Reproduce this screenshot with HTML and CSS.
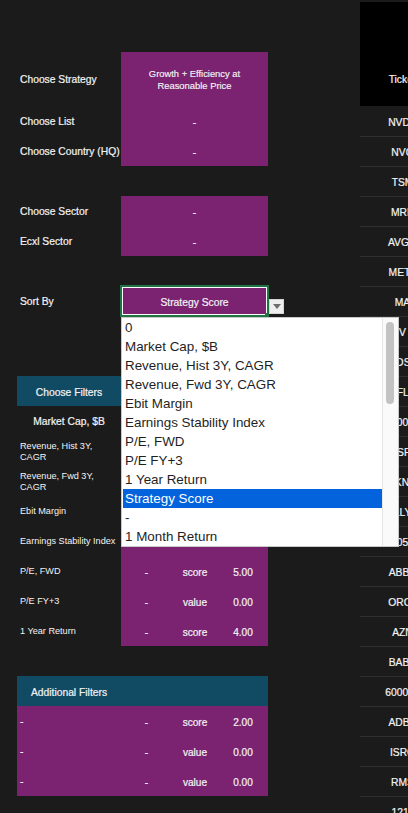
FILE: index.html
```html
<!DOCTYPE html>
<html lang="en">
<head>
<meta charset="utf-8">
<title>Strategy Screener</title>
<link rel="stylesheet" href="styles.css">
</head>
<body>
<div class="page">
  <div class="sheet">
    <div class="row tall">
      <div class="cell lbl b">Choose Strategy</div>
      <div class="cell span p small">Growth + Efficiency at<br>Reasonable Price</div>
    </div>
    <div class="row">
      <div class="cell lbl b">Choose List</div>
      <div class="cell span p b">-</div>
    </div>
    <div class="row">
      <div class="cell lbl b">Choose Country (HQ)</div>
      <div class="cell span p b">-</div>
    </div>
    <div class="row"></div>
    <div class="row">
      <div class="cell lbl b">Choose Sector</div>
      <div class="cell span p b">-</div>
    </div>
    <div class="row">
      <div class="cell lbl b">Ecxl Sector</div>
      <div class="cell span p b">-</div>
    </div>
    <div class="row"></div>
    <div class="row">
      <div class="cell lbl b">Sort By</div>
      <div class="cell span p sel">Strategy Score
        <span class="arrow"><span class="tri"></span></span>
        <div class="dropdown">
          <div class="options">
            <div class="opt">0</div>
            <div class="opt">Market Cap, $B</div>
            <div class="opt">Revenue, Hist 3Y, CAGR</div>
            <div class="opt">Revenue, Fwd 3Y, CAGR</div>
            <div class="opt">Ebit Margin</div>
            <div class="opt">Earnings Stability Index</div>
            <div class="opt">P/E, FWD</div>
            <div class="opt">P/E FY+3</div>
            <div class="opt">1 Year Return</div>
            <div class="opt on">Strategy Score</div>
            <div class="opt">-</div>
            <div class="opt">1 Month Return</div>
            <div class="opt">3 Month Return</div>
            <div class="opt">6 Month Return</div>
          </div>
          <div class="track"><div class="thumb"></div></div>
        </div>
      </div>
    </div>
    <div class="row"></div>
    <div class="row"></div>
    <div class="row head">
      <div class="cell hlbl">Choose Filters</div>
    </div>
    <div class="row">
      <div class="cell lbl b mid">Market Cap, $B</div>
      <div class="cell p v">-</div><div class="cell p v">value</div><div class="cell p v">0.00</div>
    </div>
    <div class="row">
      <div class="cell lbl">Revenue, Hist 3Y,<br>CAGR</div>
      <div class="cell p v">-</div><div class="cell p v">score</div><div class="cell p v">3.00</div>
    </div>
    <div class="row">
      <div class="cell lbl">Revenue, Fwd 3Y,<br>CAGR</div>
      <div class="cell p v">-</div><div class="cell p v">score</div><div class="cell p v">3.00</div>
    </div>
    <div class="row">
      <div class="cell lbl">Ebit Margin</div>
      <div class="cell p v">-</div><div class="cell p v">score</div><div class="cell p v">3.00</div>
    </div>
    <div class="row">
      <div class="cell lbl">Earnings Stability Index</div>
      <div class="cell p v">-</div><div class="cell p v">score</div><div class="cell p v">2.00</div>
    </div>
    <div class="row">
      <div class="cell lbl">P/E, FWD</div>
      <div class="cell p v">-</div><div class="cell p v">score</div><div class="cell p v">5.00</div>
    </div>
    <div class="row">
      <div class="cell lbl">P/E FY+3</div>
      <div class="cell p v">-</div><div class="cell p v">value</div><div class="cell p v">0.00</div>
    </div>
    <div class="row">
      <div class="cell lbl">1 Year Return</div>
      <div class="cell p v">-</div><div class="cell p v">score</div><div class="cell p v">4.00</div>
    </div>
    <div class="row"></div>
    <div class="row head">
      <div class="cell hlbl">Additional Filters</div>
    </div>
    <div class="row">
      <div class="cell lbl b p">-</div>
      <div class="cell p v">-</div><div class="cell p v">score</div><div class="cell p v">2.00</div>
    </div>
    <div class="row">
      <div class="cell lbl b p">-</div>
      <div class="cell p v">-</div><div class="cell p v">value</div><div class="cell p v">0.00</div>
    </div>
    <div class="row">
      <div class="cell lbl b p">-</div>
      <div class="cell p v">-</div><div class="cell p v">value</div><div class="cell p v">0.00</div>
    </div>
  </div>

  <div class="tickers">
    <div class="thead">Ticker</div>
    <div class="trow">NVDA</div>
    <div class="trow">NVO</div>
    <div class="trow">TSM</div>
    <div class="trow">MRK</div>
    <div class="trow">AVGO</div>
    <div class="trow">META</div>
    <div class="trow">MA</div>
    <div class="trow">V</div>
    <div class="trow">COST</div>
    <div class="trow">NFLX</div>
    <div class="trow">300059</div>
    <div class="trow">MSFT</div>
    <div class="trow">BKNG</div>
    <div class="trow">LLY</div>
    <div class="trow">600519</div>
    <div class="trow">ABBV</div>
    <div class="trow">ORCL</div>
    <div class="trow">AZN</div>
    <div class="trow">BABA</div>
    <div class="trow">600036</div>
    <div class="trow">ADBE</div>
    <div class="trow">ISRG</div>
    <div class="trow">RMS</div>
    <div class="trow">1211</div>
  </div>
</div>
</body>
</html>
```

FILE: styles.css
```css
html, body {
  margin: 0;
  padding: 0;
  background: #1b1b1b;
}

body {
  width: 408px;
  height: 813px;
  overflow: hidden;
  font-family: "Liberation Sans", Arial, sans-serif;
  color: #f3f3f3;
}

.page {
  display: flex;
  align-items: flex-start;
}

.sheet {
  width: 251px;
  margin-left: 17px;
  padding-top: 52px;
  flex-shrink: 0;
}

.row {
  display: grid;
  grid-template-columns: 104px 51px 46px 50px;
  height: 30px;
}

.row.tall {
  height: 54px;
}

.cell {
  display: flex;
  align-items: center;
  justify-content: center;
  text-align: center;
  white-space: nowrap;
  font-size: 10px;
  box-sizing: border-box;
  padding-top: 2px;
}

.lbl {
  justify-content: flex-start;
  text-align: left;
  padding-left: 3px;
  font-size: 9.15px;
  line-height: 11.5px;
}

.b {
  font-size: 10.3px;
  -webkit-text-stroke: 0.2px #f3f3f3;
}

.v {
  font-size: 10.1px;
  -webkit-text-stroke: 0.2px #f3f3f3;
}

.lbl.mid {
  justify-content: center;
  padding-left: 0;
}

.span {
  grid-column: 2 / 5;
}

.p {
  background: #7b2371;
}

.small {
  font-size: 9.4px;
  line-height: 12px;
  -webkit-text-stroke: 0.15px #f3f3f3;
}

.head {
  background: #114a63;
}

.hlbl {
  font-size: 10.3px;
  -webkit-text-stroke: 0.2px #f3f3f3;
}

/* selected sort cell */
.sel {
  position: relative;
  font-size: 10.3px;
  -webkit-text-stroke: 0.2px #f3f3f3;
  box-shadow: 0 0 0 1px #217346, inset 0 0 0 1px #217346, inset 0 0 0 2px #ffffff;
}

.sel::after {
  content: "";
  position: absolute;
  right: -1px;
  bottom: -1px;
  width: 4px;
  height: 4px;
  background: #217346;
}

.arrow {
  position: absolute;
  left: 148px;
  top: 13px;
  width: 15px;
  height: 15px;
  box-sizing: border-box;
  background: #eeeeee;
  border: 1px solid #d4d4d4;
  display: flex;
  align-items: center;
  justify-content: center;
}

.tri {
  width: 0;
  height: 0;
  border-left: 4.5px solid transparent;
  border-right: 4.5px solid transparent;
  border-top: 5px solid #6e6e6e;
}

.dropdown {
  position: absolute;
  left: 0;
  top: 31px;
  width: 278px;
  height: 230px;
  box-sizing: border-box;
  background: #ffffff;
  border: 1px solid #c9c9c9;
  overflow: hidden;
  z-index: 5;
  text-align: left;
  -webkit-text-stroke: 0;
}

.options {
  width: 261px;
  height: 228px;
  overflow: hidden;
}

.opt {
  height: 19px;
  line-height: 19px;
  margin-left: 1px;
  padding-left: 2px;
  font-size: 13.4px;
  color: #1f1f1f;
  -webkit-text-stroke: 0;
}

.opt.on {
  background: #0263dc;
  color: #ffffff;
}

.track {
  position: absolute;
  top: 0;
  right: 0;
  bottom: 0;
  width: 15px;
  background: #fafafa;
  border-left: 1px solid #e6e6e6;
}

.thumb {
  position: absolute;
  left: 3px;
  top: 4px;
  width: 8px;
  height: 82px;
  border-radius: 4px;
  background: #c2c2c2;
}

/* ticker column */
.tickers {
  margin-left: 92px;
  width: 85px;
  flex-shrink: 0;
}

.thead {
  margin-top: 2px;
  height: 104px;
  box-sizing: border-box;
  background: #000000;
  display: flex;
  align-items: flex-end;
  justify-content: center;
  padding-bottom: 20px;
  line-height: 12px;
  font-size: 10.3px;
  -webkit-text-stroke: 0.2px #f3f3f3;
}

.trow {
  height: 30px;
  box-sizing: border-box;
  padding-top: 2px;
  display: flex;
  align-items: center;
  justify-content: center;
  font-size: 10.3px;
  -webkit-text-stroke: 0.2px #f3f3f3;
}

.trow + .trow {
  border-top: 1px solid #2f2f2f;
}
```
